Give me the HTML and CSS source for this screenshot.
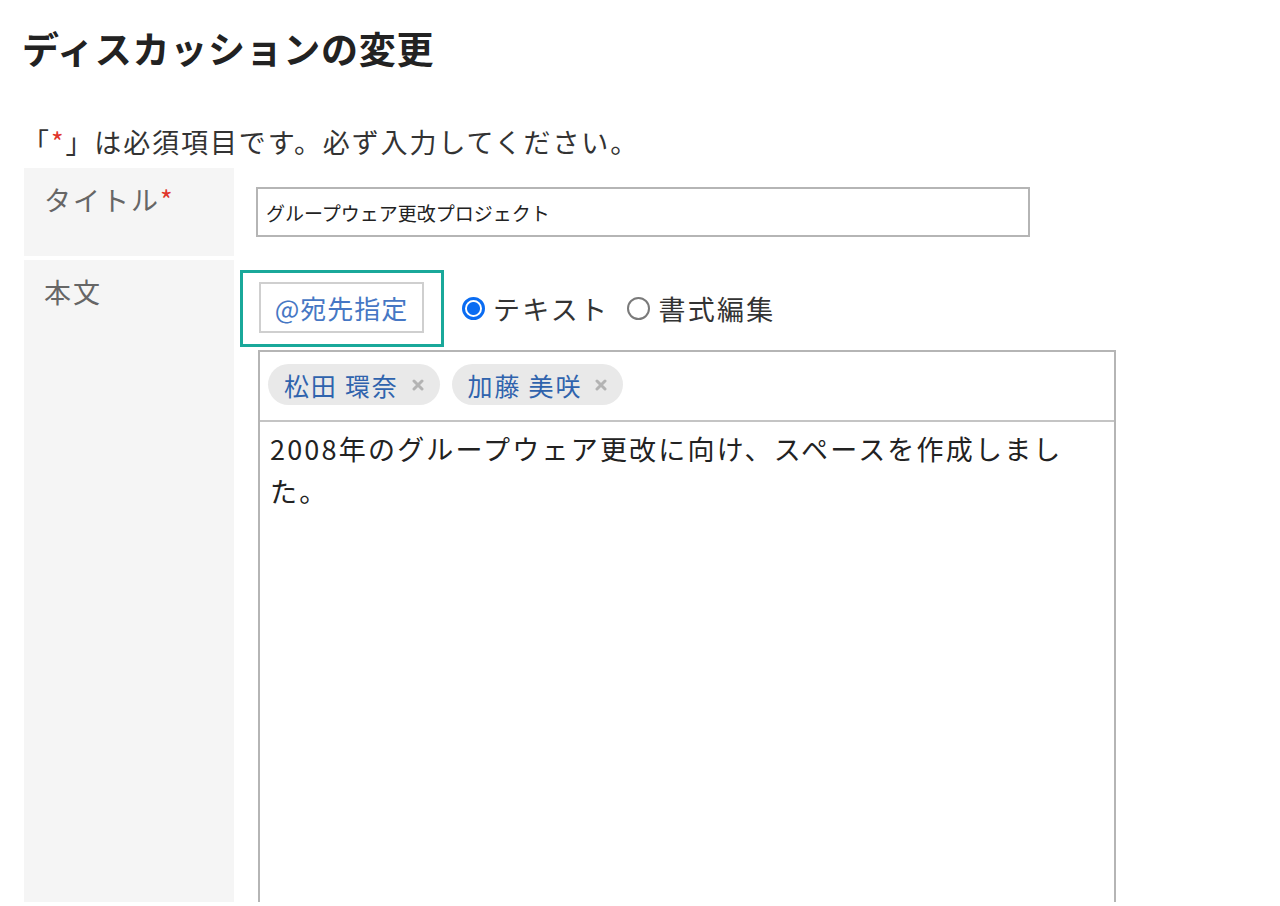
FILE: index.html
```html
<!DOCTYPE html>
<html lang="ja">
<head>
<meta charset="utf-8">
<title>ディスカッションの変更</title>
<link rel="stylesheet" href="styles.css">
</head>
<body>

<div class="page">
  <h1 class="page-title">ディスカッションの変更</h1>

  <p class="required-note">「<span class="req">*</span>」は必須項目です。必ず入力してください。</p>

  <div class="form-grid">
    <!-- タイトル -->
    <div class="form-label">タイトル<span class="req">*</span></div>
    <div class="form-value form-value-title">
      <input type="text" class="title-input" value="グループウェア更改プロジェクト">
    </div>

    <!-- 本文 -->
    <div class="form-label">本文</div>
    <div class="form-value form-value-body">
      <div class="editor-toolbar">
        <div class="mention-focus">
          <button type="button" class="mention-button">@宛先指定</button>
        </div>
        <label class="mode-option">
          <input type="radio" name="mode" checked>
          <span>テキスト</span>
        </label>
        <label class="mode-option">
          <input type="radio" name="mode">
          <span>書式編集</span>
        </label>
      </div>

      <div class="editor">
        <div class="mention-list">
          <span class="mention-tag">松田 環奈
            <svg class="tag-remove" viewBox="0 0 12 12" width="12" height="12"><path d="M2 2 L10 10 M10 2 L2 10" /></svg>
          </span>
          <span class="mention-tag">加藤 美咲
            <svg class="tag-remove" viewBox="0 0 12 12" width="12" height="12"><path d="M2 2 L10 10 M10 2 L2 10" /></svg>
          </span>
        </div>
        <div class="editor-body">
          <p>2008年のグループウェア更改に向け、スペースを作成しました。</p>
        </div>
      </div>
    </div>
  </div>
</div>

</body>
</html>
```

FILE: styles.css
```css
/* Reset */
* {
  margin: 0;
  padding: 0;
  box-sizing: border-box;
}

body {
  font-family: "Noto Sans CJK JP", "Noto Sans", sans-serif;
  color: #333;
  background-color: #fff;
}

/* Page wrapper */
.page {
  height: 902px;
  overflow: hidden;
  padding: 21px 0 0 22px;
}

.page-title {
  font-size: 37px;
  font-weight: bold;
  color: #222;
  line-height: 54px;
  letter-spacing: 0.7px;
}

.required-note {
  margin-top: 47px;
  font-size: 27px;
  line-height: 40px;
  letter-spacing: 1.9px;
}

.req {
  color: #e0362c;
}

/* Form layout */
.form-grid {
  display: grid;
  grid-template-columns: 210px 1fr;
  row-gap: 4px;
  margin-top: 6px;
  margin-left: 2px;
}

.form-label {
  background-color: #f5f5f5;
  color: #666;
  font-size: 27px;
  line-height: 40px;
  letter-spacing: 2px;
  padding: 12px 20px;
}

.form-value-title {
  padding: 19px 0 19px 22px;
}

.title-input {
  display: block;
  width: 774px;
  height: 50px;
  border: 2px solid #b5b5b5;
  padding: 0 8px;
  font-family: inherit;
  font-size: 19px;
  color: #222;
  background: #fff;
}

.form-value-body {
  padding: 10px 0 0 24px;
}

/* Toolbar above the editor */
.editor-toolbar {
  display: flex;
  align-items: center;
}

.mention-focus {
  margin-left: -18px;
  border: 3px solid #19a89a;
  padding: 9px 17px 11px 16px;
}

.mention-button {
  display: block;
  width: 165px;
  height: 51px;
  border: 2px solid #cfcfcf;
  background: #fff;
  color: #4677c4;
  font-family: inherit;
  font-size: 26px;
  letter-spacing: 1px;
}

.mode-option {
  display: flex;
  align-items: center;
  gap: 8px;
  font-size: 27px;
  letter-spacing: 2.3px;
  color: #333;
  margin-left: 18px;
}

.mode-option + .mode-option {
  margin-left: 18px;
}

.mode-option input {
  appearance: none;
  width: 23px;
  height: 23px;
  border: 2px solid #7a7a7a;
  border-radius: 50%;
  background: #fff;
}

.mode-option input:checked {
  border: 3px solid #0a6cf2;
  background: radial-gradient(circle, #0a6cf2 0 6px, #fff 7px);
}

/* Editor box */
.editor {
  margin-top: 3px;
  width: 858px;
  border: 2px solid #b5b5b5;
}

.mention-list {
  display: flex;
  gap: 12px;
  height: 70px;
  padding: 12px 0 0 8px;
  border-bottom: 2px solid #c4c4c4;
}

.mention-tag {
  display: flex;
  align-items: center;
  gap: 13px;
  height: 41px;
  padding: 0 16px;
  border-radius: 21px;
  background-color: #e9e9e9;
  color: #2f63ad;
  font-size: 25px;
  letter-spacing: 1.8px;
}

.tag-remove path {
  stroke: #b3b3b3;
  stroke-width: 3;
  stroke-linecap: round;
}

.editor-body {
  min-height: 560px;
  padding: 6px 10px;
  font-size: 27px;
  line-height: 42px;
  letter-spacing: 2.2px;
  color: #222;
}

.editor-body p {
  max-width: 820px;
}
```
